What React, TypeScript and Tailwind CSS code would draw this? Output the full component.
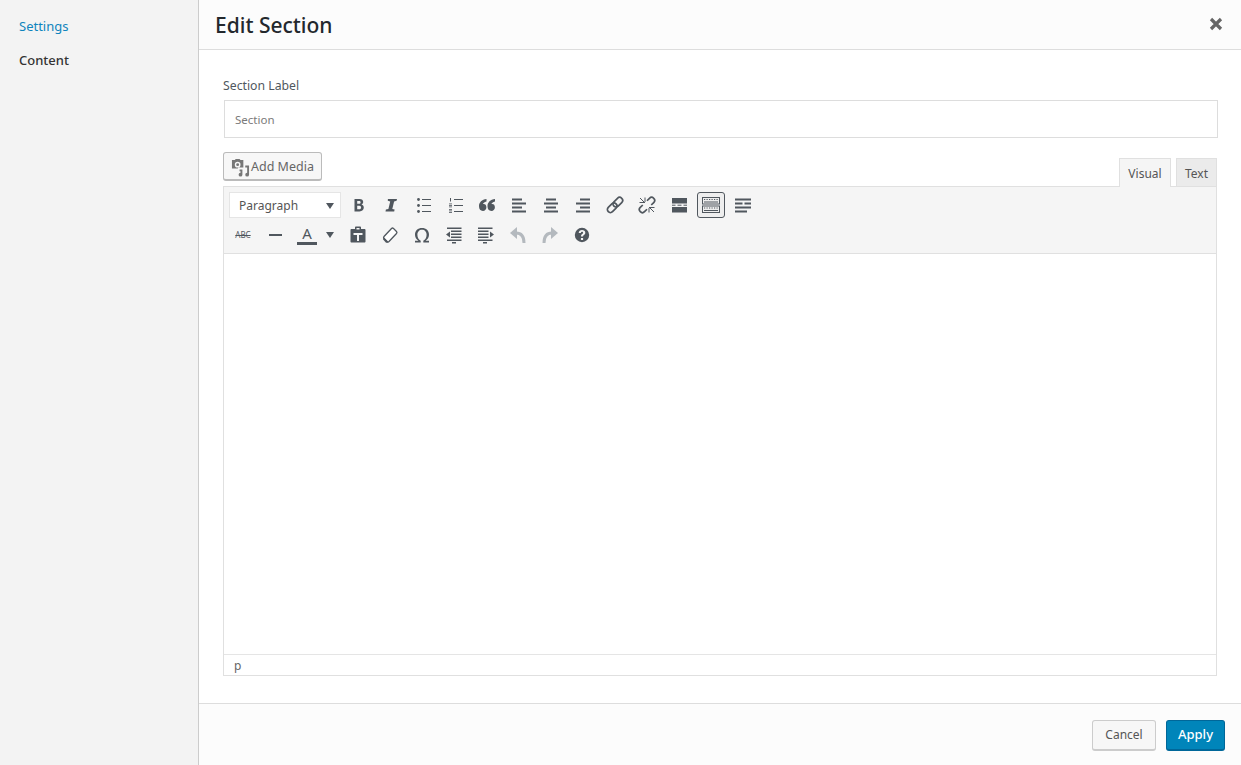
import React from "react";

const Icon: React.FC<{ children: React.ReactNode }> = ({ children }) => (
  <svg width={20} height={20} viewBox="0 0 20 20" fill="#50575e" stroke="none">
    {children}
  </svg>
);

const Lines = ({ rows, h = 2 }: { rows: [number, number, number][]; h?: number }) => (
  <>
    {rows.map(([x, y, w], i) => (
      <rect key={i} x={x} y={y} width={w} height={h} />
    ))}
  </>
);

const linkStroke = { fill: "none", stroke: "#50575e", strokeWidth: 1.7 };

const row1: { id: string; icon: React.ReactNode; active?: boolean }[] = [
  {
    id: "bold",
    icon: (
      <path
        fillRule="evenodd"
        d="M5.500 4h5c2.400 0 3.700 1.200 3.700 3 0 1.200-.7 2.200-1.800 2.600 1.500.4 2.400 1.500 2.400 3 0 2.200-1.600 3.900-4.300 3.900h-5V4zm2.700 2.100v2.600h1.900c.9 0 1.500-.5 1.500-1.300s-.6-1.300-1.500-1.300H8.200zm0 4.700v3.500h2.100c1.100 0 1.800-.7 1.800-1.800 0-1-.7-1.700-1.800-1.700H8.200z"
      />
    ),
  },
  {
    id: "italic",
    icon: <path d="M7.500 4h8.500l-.4 1.800-2.500.6-1.800 7.700 2.300.5-.4 1.900H4.500l.4-1.900 2.500-.5 1.800-7.700-2.400-.6.100-1.800z" />,
  },
  {
    id: "ul",
    icon: (
      <>
        <circle cx="5.500" cy="4.500" r="1.400" />
        <circle cx="5.500" cy="10.500" r="1.400" />
        <circle cx="5.500" cy="16.500" r="1.400" />
        <Lines h={1} rows={[[9, 4, 9], [9, 10, 9], [9, 16, 9]]} />
      </>
    ),
  },
  {
    id: "ol",
    icon: (
      <>
        <rect x="5" y="3" width="1" height="3.500" />
        <rect x="4" y="8.500" width="3" height=".8" />
        <rect x="4" y="10" width="3" height=".8" />
        <rect x="4" y="11.500" width="3" height=".8" />
        <rect x="4" y="14" width="3" height=".8" />
        <rect x="4" y="15.500" width="3" height=".8" />
        <rect x="4" y="17" width="3" height=".8" />
        <Lines h={1} rows={[[9, 4, 9], [9, 10, 9], [9, 16, 9]]} />
      </>
    ),
  },
  {
    id: "quote",
    icon: (
      <path d="M9.500 4v2.400C7.300 7 6.100 8 5.900 9.100c.2-.1.500-.1.800-.1 1.600 0 2.700 1.200 2.700 3.300 0 2-1.300 3.700-3.500 3.700-2.400 0-3.900-1.900-3.900-4.700C2 7.300 4.900 4.600 9.500 4zm8.500 0v2.400c-2.200.6-3.400 1.600-3.600 2.700.2-.1.500-.1.800-.1 1.600 0 2.700 1.200 2.700 3.300 0 2-1.300 3.700-3.500 3.700-2.400 0-3.900-1.900-3.900-4.700 0-4 2.900-6.700 7.500-7.300z" />
    ),
  },
  { id: "left", icon: <Lines rows={[[3, 3.500, 10], [3, 7.500, 14], [3, 11.500, 10], [3, 15.500, 14]]} /> },
  { id: "center", icon: <Lines rows={[[5, 3.500, 10], [3, 7.500, 14], [5, 11.500, 10], [3, 15.500, 14]]} /> },
  { id: "right", icon: <Lines rows={[[7, 3.500, 10], [3, 7.500, 14], [7, 11.500, 10], [3, 15.500, 14]]} /> },
  {
    id: "link",
    icon: (
      <g transform="rotate(-45 10 10)" {...linkStroke}>
        <rect x="0.500" y="7" width="11" height="6" rx="3" />
        <rect x="8.500" y="7" width="11" height="6" rx="3" />
      </g>
    ),
  },
  {
    id: "unlink",
    icon: (
      <>
        <g transform="rotate(-45 10 10)" {...linkStroke}>
          <path d="M7 7H3.500a3 3 0 0 0 0 6H7" />
          <path d="M13 7h3.500a3 3 0 0 1 0 6H13" />
        </g>
        <g stroke="#50575e" strokeWidth="1">
          <path d="M3 3l5 5M8 2.500v4.500M2.500 7.500h4.500M17 17l-5-5M12 17.500V13M17.500 12.500H13" />
        </g>
      </>
    ),
  },
  {
    id: "more",
    icon: (
      <>
        <rect x="3" y="3" width="15" height="5.500" />
        <rect x="3" y="12" width="15" height="5.500" />
        <rect x="3" y="9.700" width="3.500" height="1" />
        <rect x="8.500" y="9.700" width="4" height="1" />
        <rect x="14.500" y="9.700" width="3.500" height="1" />
      </>
    ),
  },
  {
    id: "kitchensink",
    active: true,
    icon: (
      <>
        <path fillRule="evenodd" d="M1 2h18v7.500H1V2zm1 1v5.500h16V3H2z" />
        <path fillRule="evenodd" d="M1 10.500h18V18H1v-7.500zm1 1V17h16v-5.500H2z" />
        <path d="M3 4h1.200v1H3zM5.500 4h1.200v1H5.500zM8 4h1.200v1H8zM10.500 4h1.200v1h-1.200zM13 4h1.200v1H13zM15.500 4h1.200v1h-1.200zM3 6.500h14v1H3z" />
        <path d="M3 12.500h1.200v1H3zM5.500 12.500h1.200v1H5.500zM8 12.500h1.200v1H8zM10.500 12.500h1.200v1h-1.200zM13 12.500h1.200v1H13zM15.500 12.500h1.200v1h-1.200zM3 15h14v1H3z" />
      </>
    ),
  },
  {
    id: "wrap",
    icon: <Lines rows={[[2, 3.500, 16], [2, 7.500, 7.500], [11.500, 7.500, 6.500], [2, 11.500, 16], [2, 15.500, 12]]} />,
  },
];

const row2: { id: string; icon: React.ReactNode }[] = [
  {
    id: "paste",
    icon: (
      <path
        fillRule="evenodd"
        d="M7 2.500c0-.6.500-1 1-1h4c.5 0 1 .4 1 1V4h3.500c.5 0 1 .4 1 1v11.500c0 .6-.5 1-1 1h-13c-.5 0-1-.4-1-1V5c0-.6.500-1 1-1H7V2.500zM8.500 3v1.500h3V3h-3zM5.500 8v2H9v6h2v-6h3.500V8h-9z"
      />
    ),
  },
  {
    id: "eraser",
    icon: (
      <>
        <path
          d="M11.500 3.500a1.500 1.500 0 0 1 2 0l3 3a1.500 1.500 0 0 1 0 2l-7.500 8a1.500 1.500 0 0 1-2 0l-3-3a1.500 1.500 0 0 1 0-2l7.500-8z"
          fill="#fff"
          stroke="#50575e"
          strokeWidth="1.3"
        />
        <path d="M4 12.500L8.500 17l-1 .7h-1.500l-3-3.500.3-1z" />
      </>
    ),
  },
  {
    id: "omega",
    icon: (
      <path d="M3 17.500v-1.800h3.400C4.300 14.300 3 12.200 3 9.700 3 5.700 5.900 3 10 3s7 2.700 7 6.700c0 2.500-1.300 4.600-3.400 6h3.400v1.800h-5.700v-1.700c2-1 3.300-3.300 3.300-6 0-3-1.800-5.100-4.600-5.100S5.400 6.800 5.400 9.800c0 2.700 1.300 5 3.300 6v1.700H3z" />
    ),
  },
  {
    id: "outdent",
    icon: (
      <>
        <Lines h={1.500} rows={[[3, 2.500, 14.500], [7, 5.500, 10.500], [7, 8.500, 10.500], [7, 11.500, 10.500], [3, 14.500, 14.500], [8, 17, 4]]} />
        <path d="M6 6.500L2 9.500l4 3v-6z" />
      </>
    ),
  },
  {
    id: "indent",
    icon: (
      <>
        <Lines h={1.500} rows={[[2, 2.500, 14.500], [2, 5.500, 10.500], [2, 8.500, 10.500], [2, 11.500, 10.500], [2, 14.500, 14.500], [7, 17, 4]]} />
        <path d="M14 6.500l4 3-4 3v-6z" />
      </>
    ),
  },
  {
    id: "undo",
    icon: (
      <>
        <path d="M9 2L2 8l7 6V2z" fill="#b4b9be" />
        <path d="M8 8c5 0 8 3 8 10" fill="none" stroke="#b4b9be" strokeWidth="3" />
      </>
    ),
  },
  {
    id: "redo",
    icon: (
      <>
        <path d="M11 2l7 6-7 6V2z" fill="#b4b9be" />
        <path d="M12 8c-5 0-8 3-8 10" fill="none" stroke="#b4b9be" strokeWidth="3" />
      </>
    ),
  },
  {
    id: "help",
    icon: (
      <path
        fillRule="evenodd"
        d="M10 2.800a7.200 7.200 0 1 1 0 14.400 7.200 7.200 0 0 1 0-14.400zM8.900 13v2h2.200v-2H8.900zM10 5c-1.800 0-3.200 1-3.300 3h2.100c.1-.8.500-1.200 1.200-1.200.7 0 1.100.4 1.100 1 0 .5-.3.800-.9 1.300-.9.700-1.200 1.300-1.200 2.400h2.100c0-.7.200-1 .9-1.500.8-.6 1.300-1.300 1.300-2.300C13.300 6 11.900 5 10 5z"
      />
    ),
  },
];

const ToolButton: React.FC<{ children: React.ReactNode; active?: boolean }> = ({ children, active }) => (
  <div
    className={`w-7 h-[26px] flex items-center justify-center rounded-[3px] ${
      active ? "border border-[#50575e] bg-[#eeeeee]" : ""
    }`}
  >
    {children}
  </div>
);

const Caret = () => (
  <span className="block w-0 h-0 border-x-[4px] border-x-transparent border-t-[6px] border-t-[#50575e]" />
);

export default function App() {
  return (
    <div className="h-[765px] w-[1241px] flex overflow-hidden bg-white font-['Noto_Sans',sans-serif]">
      <aside className="w-[199px] shrink-0 bg-[#f3f3f3] border-r border-[#ccc] pl-[19px] pt-[17px]">
        <div className="text-[13px] leading-[18px] text-[#0f84bd]">Settings</div>
        <div className="mt-4 text-[13px] leading-[18px] font-medium text-[#333]">Content</div>
      </aside>

      <main className="flex-1 flex flex-col min-w-0">
        <header className="h-[50px] shrink-0 bg-[#fcfcfc] border-b border-[#ddd] flex items-center justify-between pl-4 pr-[17px] pb-px">
          <h1 className="text-[21px] leading-[30px] pt-px font-medium text-[#23282d]">Edit Section</h1>
          <svg width="16" height="16" viewBox="0 0 16 16" fill="none" stroke="#666" strokeWidth="3.2">
            <path d="M3 3l10 10M13 3L3 13" />
          </svg>
        </header>

        <section className="flex-1 pl-[25px] pr-[23px] pt-[26px]">
          <label className="block text-[12.25px] leading-[20px] text-[#50575e] -ml-px">Section Label</label>
          <div className="mt-[4px] h-[38px] border border-[#ddd] flex items-center pl-[10px] pt-px text-[11.5px] text-[#7a7a7a]">
            Section
          </div>

          <div className="mt-[14px] -ml-px flex items-end justify-between h-[34px]">
            <button className="self-start h-[29px] w-[99px] border border-[#bbb] border-b-2 rounded-[3px] bg-[#f7f7f7] flex items-center pl-[7px] pt-[2px] gap-px text-[12.5px] text-[#666]">
              <svg width="19" height="19" viewBox="0 0 20 20" fill="#777">
                <path d="M1 2h3l1-1h4l1 1h3v8H8l-1 1H1V2zm6 2a3 3 0 1 0 0 6 3 3 0 0 0 0-6z" fillRule="evenodd" />
                <circle cx="7" cy="7" r="1.5" />
                <path d="M15 8h4v9.500a2 2 0 1 1-2-2V10h-2V8zM9 12h3v5.500a2 2 0 1 1-2-2V14H9v-2z" />
              </svg>
              Add Media
            </button>
            <div className="flex items-end text-[12px] text-[#555] mr-px">
              <div className="h-[29px] w-[52px] border border-[#e0e0e0] border-b-0 bg-[#f5f5f5] flex items-center justify-center pt-px -mb-px relative">
                Visual
              </div>
              <div className="ml-[5px] h-[28px] w-[41px] border border-[#e0e0e0] border-b-0 bg-[#ebebeb] flex items-center justify-center pt-[2px]">
                Text
              </div>
            </div>
          </div>

          <div className="h-[490px] border border-[#e0e0e0] flex flex-col mr-px -ml-px">
            <div className="h-[67px] shrink-0 bg-[#f5f5f5] border-b border-[#e0e0e0] pl-[5px] pt-[5px]">
              <div className="flex items-center h-[26px]">
                <div className="w-[112px] h-[26px] bg-white border border-[#e5e5e5] flex items-center justify-between pl-[9px] pr-[6px] pt-px text-[12px] text-[#555]">
                  Paragraph
                  <Caret />
                </div>
                <div className="ml-[4px] flex gap-1">
                  {row1.map((b) => (
                    <ToolButton key={b.id} active={b.active}>
                      <Icon>{b.icon}</Icon>
                    </ToolButton>
                  ))}
                </div>
              </div>
              <div className="flex items-center h-[26px] mt-1">
                <div className="w-7 flex justify-center">
                  <span className="text-[8px] text-[#50575e] line-through">ABC</span>
                </div>
                <div className="ml-[4px] w-7 flex justify-center">
                  <span className="block w-[13px] h-[2px] bg-[#50575e]" />
                </div>
                <div className="ml-[4px] w-7 flex flex-col items-center text-[15px] leading-[17px] text-[#50575e]">
                  A<span className="block w-5 h-[3px] bg-[#50575e]" />
                </div>
                <span className="ml-[5px] flex">
                  <Caret />
                </span>
                <div className="ml-[10px] flex gap-1">
                  {row2.map((b) => (
                    <ToolButton key={b.id}>
                      <Icon>{b.icon}</Icon>
                    </ToolButton>
                  ))}
                </div>
              </div>
            </div>
            <div className="flex-1 bg-white" />
            <div className="h-[21px] shrink-0 border-t border-[#e5e5e5] pl-[10px] pt-px text-[12px] leading-[20px] text-[#666]">
              p
            </div>
          </div>
        </section>

        <footer className="h-[62px] shrink-0 bg-[#fcfcfc] border-t border-[#ddd] flex items-start justify-end gap-[10px] pt-4 pr-4">
          <button className="h-[31px] w-[64px] border border-[#ccc] border-b-2 rounded-[3px] bg-[#f7f7f7] text-[12px] text-[#555]">
            Cancel
          </button>
          <button className="h-[31px] w-[59px] border border-[#006799] border-b-2 rounded-[3px] bg-[#0085ba] text-[13px] font-medium text-white">
            Apply
          </button>
        </footer>
      </main>
    </div>
  );
}
